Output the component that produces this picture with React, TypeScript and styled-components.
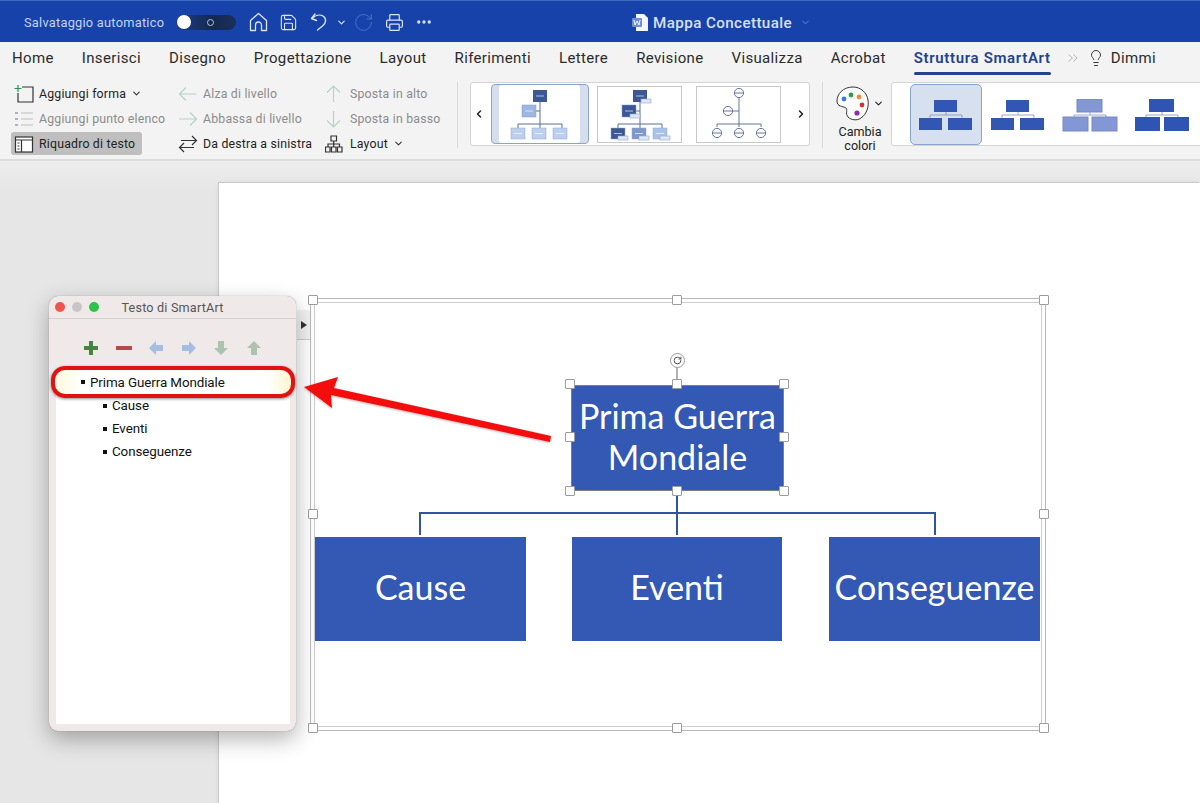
import type {ReactNode} from 'react'
import styled, {createGlobalStyle} from 'styled-components'
import {Save, RotateCw, Printer, Ellipsis, ChevronDown, ChevronLeft, ChevronRight, ChevronsRight, Lightbulb} from 'lucide-react'

const GlobalStyle = createGlobalStyle`
  html, body { margin: 0; padding: 0; background: #e6e6e6; }
  body { font-family: Roboto, "Liberation Sans", sans-serif; }
`

const Screen = styled.div`
  width: 1200px;
  height: 803px;
  overflow: hidden;
  position: relative;
  display: flex;
  flex-direction: column;
`

/* ---- title bar ---- */
const TitleBar = styled.header`
  height: 42px;
  flex: none;
  box-sizing: border-box;
  background: #1742a9;
  border-top: 1px solid #3a6cc4;
  color: #fff;
  display: flex;
  align-items: center;
  padding: 1px 0 0 24px;
  position: relative;
`
const AutoSave = styled.span`
  font-size: 12.8px;
  letter-spacing: 0.25px;
  color: #c5d3ee;
  width: 152px;
`
const Toggle = styled.div`
  width: 60px;
  height: 15px;
  border-radius: 8px;
  background: linear-gradient(90deg, #1b3f8f, #14294f 60%, #1b2f5c);
  display: flex;
  align-items: center;
  margin-right: 7px;
  i {
    width: 14px;
    height: 14px;
    border-radius: 50%;
    background: #fff;
    margin-left: 1px;
  }
  b {
    width: 5px;
    height: 5px;
    border: 1px solid #b9c5de;
    border-radius: 50%;
    margin-left: 16px;
  }
`
const BarIcon = styled.span<{$w: number; $faded?: boolean}>`
  width: ${p => p.$w}px;
  display: flex;
  justify-content: center;
  color: ${p => (p.$faded ? '#5177c6' : '#dce5f6')};
`
const DocTitle = styled.div`
  position: absolute;
  left: 632px;
  top: 1px;
  height: 41px;
  display: flex;
  align-items: center;
  gap: 5px;
  font-size: 15.2px;
  font-weight: 500;
  letter-spacing: 0.4px;
  color: #d6e0f4;
  svg:last-child {
    color: #6f8fd0;
    margin-left: 3px;
  }
`

/* ---- tabs ---- */
const TabBar = styled.nav`
  height: 36px;
  flex: none;
  box-sizing: border-box;
  background: #f3f3f3;
  display: flex;
  align-items: center;
  padding: 0 0 4px 12px;
  gap: 28px;
  color: #2b2b2b;
  font-size: 15px;
  letter-spacing: 0.35px;
`
const Tab = styled.span<{$active?: boolean}>`
  position: relative;
  white-space: nowrap;
  ${p => p.$active && `
    color: #23428f;
    font-weight: 600;
    letter-spacing: 0.65px;
    &::after {
      content: '';
      position: absolute;
      left: 0;
      right: 0;
      bottom: -8px;
      height: 3px;
      border-radius: 2px;
      background: #23428f;
    }
  `}
`
const TabExtras = styled.span`
  display: flex;
  align-items: center;
  margin-left: -14px;
  gap: 6px;
  svg:first-child { color: #b5b5b5; }
`

/* ---- ribbon ---- */
const Ribbon = styled.section`
  height: 83px;
  flex: none;
  box-sizing: border-box;
  background: #f3f3f3;
  border-bottom: 2px solid #dcdcdc;
  display: flex;
  align-items: flex-start;
  padding: 4px 0 0 11px;
`
const CommandColumn = styled.div<{$w: number}>`
  width: ${p => p.$w}px;
  flex: none;
  display: flex;
  flex-direction: column;
`
const Command = styled.div<{$off?: boolean; $on?: boolean; $gap: number}>`
  height: 23px;
  margin-bottom: 2px;
  display: flex;
  align-items: center;
  align-self: flex-start;
  white-space: nowrap;
  font-size: 12.3px;
  letter-spacing: 0.2px;
  border-radius: 3px;
  gap: ${p => p.$gap}px;
  padding-right: 7px;
  color: ${p => (p.$off ? '#8b8b8b' : '#222')};
  background: ${p => (p.$on ? '#bfbfbf' : 'transparent')};
`
const Caret = styled(ChevronDown)<{$m: number}>`
  margin-left: ${p => p.$m}px;
  color: #333;
`
const Divider = styled.div<{$m: number}>`
  width: 1px;
  height: 66px;
  background: #d9d9d9;
  flex: none;
  margin-left: ${p => p.$m}px;
`
const Gallery = styled.div<{$w: number; $m: number}>`
  width: ${p => p.$w}px;
  height: 64px;
  flex: none;
  box-sizing: border-box;
  background: #fff;
  border: 1px solid #d5d5d5;
  border-radius: 3px;
  display: flex;
  align-items: center;
  margin-left: ${p => p.$m}px;
`
const GalleryArrow = styled.span<{$w: number; $pad?: number}>`
  width: ${p => p.$w}px;
  flex: none;
  box-sizing: border-box;
  padding-right: ${p => p.$pad || 0}px;
  display: flex;
  justify-content: center;
  color: #222;
`
const Thumb = styled.div<{$sel?: boolean}>`
  width: 85px;
  height: 57px;
  flex: none;
  box-sizing: border-box;
  border: 1px solid #c9c9c9;
  background: #fff;
  margin-right: 14px;
  ${p => p.$sel && `
    width: 98px;
    height: 60px;
    margin-right: 8px;
    border: 1px solid #86a4cd;
    border-radius: 4px;
    background: #fff;
    box-shadow: inset 7px 0 0 #d4deec, inset -8px 0 0 #d4deec;
  `}
  display: flex;
  align-items: center;
  justify-content: center;
`
const ColorButton = styled.div`
  width: 68px;
  flex: none;
  box-sizing: border-box;
  padding-left: 6px;
  display: flex;
  flex-direction: column;
  align-items: center;
  font-size: 12.6px;
  line-height: 14px;
  text-align: center;
  color: #222;
  span { display: flex; align-items: center; gap: 3px; height: 43px; }
`
const StyleTile = styled.div<{$sel?: boolean}>`
  width: 72px;
  height: 61px;
  flex: none;
  box-sizing: border-box;
  padding-top: 3px;
  display: flex;
  align-items: center;
  justify-content: center;
  border-radius: 5px;
  ${p => p.$sel && `
    background: #d6e0ef;
    border: 1px solid #88a5cf;
    margin-left: 18px;
  `}
`

/* ---- document area ---- */
const Workspace = styled.main`
  flex: 1;
  position: relative;
  background: linear-gradient(#ededed, #e6e6e6 30px);
  padding: 22px 0 0 219px;
  min-height: 0;
`
const Page = styled.div`
  height: 700px;
  background: #fff;
  box-shadow: -1px -1px 0 #c8c8c8, 0 0 6px rgba(0, 0, 0, 0.08);
  position: relative;
`
const SmartFrame = styled.div`
  position: absolute;
  left: 91px;
  top: 115px;
  width: 736px;
  height: 433px;
  box-sizing: border-box;
  border: 1px solid #b9b9b9;
  &::after {
    content: '';
    position: absolute;
    inset: 3px;
    border: 1px solid #cdcdcd;
  }
`
const Handle = styled.i<{$x: number; $y: number}>`
  position: absolute;
  left: ${p => p.$x - 5}px;
  top: ${p => p.$y - 5}px;
  width: 8px;
  height: 8px;
  background: #fff;
  border: 1px solid #9d9d9d;
  border-radius: 1px;
  z-index: 3;
`
const Node = styled.div<{$x: number; $y: number; $w: number; $h: number; $sel?: boolean}>`
  position: absolute;
  left: ${p => p.$x}px;
  top: ${p => p.$y}px;
  width: ${p => p.$w}px;
  height: ${p => p.$h}px;
  box-sizing: border-box;
  padding-bottom: 5px;
  background: #3359b5;
  color: #fff;
  display: flex;
  align-items: center;
  justify-content: center;
  text-align: center;
  font-family: Lato, "Open Sans", sans-serif;
  font-size: 34px;
  line-height: 41px;
  ${p => p.$sel && 'border: 1px solid #7f7f7f;'}
`
const Connectors = styled.svg`
  position: absolute;
  left: 0;
  top: 0;
  width: 981px;
  height: 620px;
  pointer-events: none;
`
const RotateHandle = styled.span`
  position: absolute;
  left: 451px;
  top: 170px;
  width: 13px;
  height: 13px;
  border: 1px solid #9a9a9a;
  border-radius: 50%;
  background: #fff;
  display: flex;
  align-items: center;
  justify-content: center;
  color: #444;
`
const PaneToggle = styled.div`
  position: absolute;
  left: 78px;
  top: 127px;
  width: 13px;
  height: 30px;
  box-sizing: border-box;
  background: #f2f2f2;
  border-bottom: 1px solid #cfcfcf;
  display: flex;
  align-items: center;
  justify-content: center;
  &::before {
    content: '';
    border-left: 6px solid #333;
    border-top: 4px solid transparent;
    border-bottom: 4px solid transparent;
  }
`

/* ---- floating text pane ---- */
const TextPane = styled.aside`
  position: absolute;
  left: 49px;
  top: 135px;
  width: 247px;
  height: 435px;
  box-sizing: border-box;
  background: #f0e9ea;
  border-radius: 9px;
  box-shadow: 0 0 1px rgba(0, 0, 0, 0.45), 0 8px 22px rgba(0, 0, 0, 0.3);
  display: flex;
  flex-direction: column;
  z-index: 5;
`
const PaneHead = styled.div`
  height: 22px;
  flex: none;
  border-bottom: 1px solid #d6d0d1;
  display: flex;
  align-items: center;
  padding-left: 6px;
  gap: 7px;
  position: relative;
  font-size: 12.6px;
  letter-spacing: 0.2px;
  color: #555;
  span {
    position: absolute;
    left: 0;
    right: 0;
    text-align: center;
  }
`
const Light = styled.i<{$c: string}>`
  width: 10px;
  height: 10px;
  border-radius: 50%;
  background: ${p => p.$c};
  position: relative;
  z-index: 1;
`
const PaneTools = styled.div`
  height: 56px;
  flex: none;
  box-sizing: border-box;
  display: flex;
  align-items: center;
  padding: 2px 0 0 34px;
  gap: 16.5px;
`
const OutlineBox = styled.div`
  flex: 1;
  margin: 0 6px 7px 7px;
  background: #fff;
  font-size: 13.4px;
  color: #111;
  padding-top: 19px;
  position: relative;
`
const OutlineRow = styled.div`
  height: 23px;
  display: flex;
  align-items: center;
  gap: 5px;
  padding-left: 47px;
  letter-spacing: -0.1px;
  &::before {
    content: '';
    width: 4px;
    height: 4px;
    background: #111;
  }
`
const FirstRow = styled(OutlineRow)`
  position: absolute;
  left: -5px;
  top: -9px;
  width: 244px;
  height: 32px;
  box-sizing: border-box;
  padding-left: 26px;
  border: 4px solid #e11212;
  border-radius: 14px;
  background: linear-gradient(90deg, #fff9dd 0, #fff 12%, #fff 90%, #fdf6cf 100%);
  box-shadow: 0 1px 3px rgba(0, 0, 0, 0.45);
`
const ArrowOverlay = styled.svg`
  position: absolute;
  left: 0;
  top: 0;
  width: 1200px;
  height: 803px;
  pointer-events: none;
  z-index: 6;
`

/* ---- little drawings ---- */
const CommandGlyph = ({children}: {children: ReactNode}) => (
  <svg width="24" height="20" viewBox="0 0 24 20" fill="none" strokeWidth="1.2">{children}</svg>
)

const OrgThumb = ({top, side, kids, tags, line = '#5a6f96', dashes = '#fff'}: {
  top: string; side: string; kids: string[]; tags?: boolean; line?: string; dashes?: string
}) => (
  <svg width="64" height="54" viewBox="0 0 64 54">
    <path d="M32 8V37M10 42V37H54V42M32 37V42M32 24H26" fill="none" stroke={line} strokeWidth="1"/>
    <rect x="25" y="3" width="14" height="12" fill={top}/>
    <rect x="14" y="18" width="14" height="12" fill={side} stroke="#7f9ccb" strokeWidth="0.5"/>
    {kids.map((c, i) => <rect key={i} x={3 + i * 21} y="41" width="14" height="11" fill={c} stroke="#8ea7d2" strokeWidth="0.5"/>)}
    <path d="M28 9h8M17 24h8M6 46.500h8M27 46.500h8M48 46.500h8" stroke={dashes} strokeWidth="0.8" opacity="0.8"/>
    {tags && <g fill="#dfe7f4" stroke="#8ea7d2" strokeWidth="0.6">
      <rect x="33" y="12" width="10" height="4"/><rect x="22" y="27" width="10" height="4"/>
      <rect x="10" y="49" width="10" height="4"/><rect x="31" y="49" width="10" height="4"/><rect x="52" y="49" width="10" height="4"/>
    </g>}
  </svg>
)

const RingThumb = () => (
  <svg width="64" height="54" viewBox="0 0 64 54" fill="#fff" stroke="#56688c" strokeWidth="0.9">
    <path d="M32 10V37M10 40V37H54V40M32 37V40M32 24H26" fill="none"/>
    <circle cx="32" cy="6" r="4.600"/><path d="M28 6h8"/>
    <circle cx="21" cy="24" r="4.600"/><path d="M17 24h8"/>
    <circle cx="10" cy="46" r="4.600"/><path d="M6 46h8"/>
    <circle cx="32" cy="46" r="4.600"/><path d="M28 46h8"/>
    <circle cx="54" cy="46" r="4.600"/><path d="M50 46h8"/>
  </svg>
)

const StyleGlyph = ({fill, edge = 'none', big = false}: {fill: string; edge?: string; big?: boolean}) => (
  <svg width="56" height="34" viewBox="0 0 56 34">
    <path d="M28 12V16M12 20V16H44V20" fill="none" stroke="#7f96c0" strokeWidth="0.8"/>
    <rect x={big ? 15 : 16} y={big ? 0 : 1} width={big ? 25 : 23} height={big ? 13 : 12} fill={fill} stroke={edge}/>
    <rect x="1" y={big ? 18 : 19} width={big ? 25 : 23} height={big ? 14 : 12} fill={fill} stroke={edge}/>
    <rect x="30" y={big ? 18 : 19} width={big ? 25 : 24} height={big ? 14 : 12} fill={fill} stroke={edge}/>
  </svg>
)

const PaneArrow = ({d, fill}: {d: string; fill: string}) => (
  <svg width="16" height="16" viewBox="0 0 16 16"><path d={d} fill={fill}/></svg>
)

export default function App() {
  return (
    <Screen>
      <GlobalStyle/>
      <TitleBar>
        <AutoSave>Salvataggio automatico</AutoSave>
        <Toggle><i/><b/></Toggle>
        <BarIcon $w={30}>
          <svg width="19" height="20" viewBox="0 0 19 20" fill="none" stroke="currentColor" strokeWidth="1.3" strokeLinejoin="round">
            <path d="M1.500 8.500 9.500 1.500l8 7V18.500H12.500V13a3 3 0 0 0-6 0v5.500H1.500z"/>
          </svg>
        </BarIcon>
        <BarIcon $w={30}><Save size={19} strokeWidth={1.4}/></BarIcon>
        <BarIcon $w={32}>
          <svg width="20" height="20" viewBox="0 0 20 20" fill="none" stroke="currentColor" strokeWidth="1.4" strokeLinecap="round" strokeLinejoin="round">
            <path d="M6 2 2.500 6.500l5 2"/><path d="M3 6.500C6 3.500 10.500 2 14 4c3.500 2.300 3.500 7-.5 10L8.500 18"/>
          </svg>
        </BarIcon>
        <BarIcon $w={12}><ChevronDown size={11} strokeWidth={2.4}/></BarIcon>
        <BarIcon $w={32} $faded><RotateCw size={21} strokeWidth={1}/></BarIcon>
        <BarIcon $w={30}><Printer size={19} strokeWidth={1.5}/></BarIcon>
        <BarIcon $w={30}><Ellipsis size={18} strokeWidth={2.4}/></BarIcon>
        <DocTitle>
          <svg width="16" height="17" viewBox="0 0 16 17">
            <path d="M4 0h8l4 4v13H4z" fill="#f3f6fc"/>
            <rect x="0" y="4" width="10" height="9" rx="1" fill="#6f8fd0"/>
            <path d="M2 6l1 5 2-4 2 4 1-5" fill="none" stroke="#fff" strokeWidth="0.9"/>
          </svg>
          Mappa Concettuale
          <ChevronDown size={11}/>
        </DocTitle>
      </TitleBar>

      <TabBar>
        <Tab>Home</Tab>
        <Tab>Inserisci</Tab>
        <Tab>Disegno</Tab>
        <Tab>Progettazione</Tab>
        <Tab>Layout</Tab>
        <Tab>Riferimenti</Tab>
        <Tab>Lettere</Tab>
        <Tab>Revisione</Tab>
        <Tab>Visualizza</Tab>
        <Tab>Acrobat</Tab>
        <Tab $active>Struttura SmartArt</Tab>
        <TabExtras>
          <ChevronsRight size={16} strokeWidth={1.5}/>
          <Lightbulb size={18} strokeWidth={1.3} color="#333"/>
          Dimmi
        </TabExtras>
      </TabBar>

      <Ribbon>
        <CommandColumn $w={167}>
          <Command $gap={4}>
            <CommandGlyph>
              <path d="M11 3h11v15H7V9" stroke="#333"/><path d="M7 1v7M3.500 4.500h7" stroke="#1f9a4b"/>
            </CommandGlyph>
            Aggiungi forma <Caret $m={1} size={11} strokeWidth={2.4}/>
          </Command>
          <Command $gap={4} $off>
            <CommandGlyph>
              <path d="M10 4h12M10 10h12M10 16h12" stroke="#bdbdbd"/>
              <path d="M4 3h3v2H4zM4 9h3v2H4zM4 15h3v2H4z" fill="#b6a8da"/>
            </CommandGlyph>
            Aggiungi punto elenco
          </Command>
          <Command $gap={4} $on>
            <CommandGlyph>
              <rect x="4.500" y="3" width="17" height="15" fill="#fff" stroke="#333"/>
              <path d="M4.500 6h17M10.500 6v12M6.500 9h2M6.500 12h2M6.500 15h2" stroke="#333"/>
            </CommandGlyph>
            Riquadro di testo
          </Command>
        </CommandColumn>
        <CommandColumn $w={147}>
          <Command $gap={1} $off>
            <CommandGlyph>
              <path d="M18.500 10H1.500M8 3.500 1.500 10 8 16.500" stroke="#b6d5c2"/>
            </CommandGlyph>
            Alza di livello
          </Command>
          <Command $gap={1} $off>
            <CommandGlyph>
              <path d="M1 10h17M12 3.500l6.500 6.500-6.500 6.500" stroke="#b6d5c2"/>
            </CommandGlyph>
            Abbassa di livello
          </Command>
          <Command $gap={1}>
            <CommandGlyph>
              <path d="M3 6.500h15.500M14 2l4.500 4.500L14 11M16 13.500H1.500M6 9l-4.500 4.500L6 18" stroke="#333"/>
            </CommandGlyph>
            Da destra a sinistra
          </Command>
        </CommandColumn>
        <CommandColumn $w={132}>
          <Command $gap={1} $off>
            <CommandGlyph>
              <path d="M8.500 18V2M2 8.500 8.500 2 15 8.500" stroke="#b6d5c2"/>
            </CommandGlyph>
            Sposta in alto
          </Command>
          <Command $gap={1} $off>
            <CommandGlyph>
              <path d="M8.500 2v16M2 11.500 8.500 18 15 11.500" stroke="#b6d5c2"/>
            </CommandGlyph>
            Sposta in basso
          </Command>
          <Command $gap={1}>
            <CommandGlyph>
              <path d="M6 2h5.500v5H6zM.5 13h4.500v5H.5zM6.500 13h4.500v5H6.500zM12.500 13h4.500v5h-4.500zM8.700 7v6M3 13v-3h11.500v3" stroke="#333"/>
            </CommandGlyph>
            Layout <Caret $m={4} size={11} strokeWidth={2.4}/>
          </Command>
        </CommandColumn>
        <Divider $m={0}/>
        <Gallery $w={340} $m={12}>
          <GalleryArrow $w={20} $pad={4}><ChevronLeft size={12} strokeWidth={3}/></GalleryArrow>
          <Thumb $sel><OrgThumb top="#3b5796" side="#9db7e0" kids={['#bcd0ee', '#bcd0ee', '#bcd0ee']}/></Thumb>
          <Thumb><OrgThumb tags top="#3b5796" side="#3b5796" kids={['#3b5796', '#7e97cc', '#a9c3e8']}/></Thumb>
          <Thumb><RingThumb/></Thumb>
          <GalleryArrow $w={12}><ChevronRight size={12} strokeWidth={3}/></GalleryArrow>
        </Gallery>
        <Divider $m={12}/>
        <ColorButton>
          <span>
            <svg width="34" height="36" viewBox="0 0 34 36">
              <path d="M17 1C7 1 1 8 1 15c0 6 6 5 9 7 2 2-1 5 2 9 3 3 9 4 13 1 6-4 8-12 7-18C31 7 25 1 17 1z" fill="#fff" stroke="#333" strokeWidth="1"/>
              <circle cx="8" cy="13" r="2.400" fill="#3a7bd5"/>
              <circle cx="15" cy="9" r="2.400" fill="#2e9a4d"/>
              <circle cx="23" cy="11" r="2.400" fill="#ee8a3c"/>
              <circle cx="26" cy="19" r="2.400" fill="#d9302f"/>
              <circle cx="21" cy="27" r="2.600" fill="#8a2fa8"/>
            </svg>
            <ChevronDown size={11} strokeWidth={2.4}/>
          </span>
          Cambia<br/>colori
        </ColorButton>
        <Gallery $w={320} $m={0}>
          <StyleTile $sel><StyleGlyph fill="#3156b4"/></StyleTile>
          <StyleTile><StyleGlyph fill="#3156b4"/></StyleTile>
          <StyleTile><StyleGlyph big fill="#8397d4" edge="#7689c6"/></StyleTile>
          <StyleTile><StyleGlyph big fill="#2f54b4"/></StyleTile>
        </Gallery>
      </Ribbon>

      <Workspace>
        <Page>
          <PaneToggle/>
          <SmartFrame/>
          <Connectors viewBox="0 0 981 620">
            <path d="M201 352V330H716V352M458 308V352" fill="none" stroke="#32549f" strokeWidth="2"/>
            <path d="M458 183V202" stroke="#666" strokeWidth="1"/>
          </Connectors>
          <RotateHandle><RotateCw size={9} strokeWidth={2.4}/></RotateHandle>
          <Node $sel $x={352} $y={202} $w={213} $h={106}>Prima Guerra<br/>Mondiale</Node>
          <Node $x={96} $y={354} $w={211} $h={104}>Cause</Node>
          <Node $x={353} $y={354} $w={210} $h={104}>Eventi</Node>
          <Node $x={610} $y={354} $w={211} $h={104}>Conseguenze</Node>
          {[[351, 201], [458, 201], [565, 201], [351, 254], [565, 254], [351, 308], [458, 308], [565, 308],
            [94, 117], [458, 117], [825, 117], [94, 331], [825, 331], [94, 545], [458, 545], [825, 545]].map(([x, y]) => (
            <Handle key={`${x}-${y}`} $x={x} $y={y}/>
          ))}
        </Page>
        <TextPane>
          <PaneHead>
            <Light $c="#f0544c"/><Light $c="#c9c5c6"/><Light $c="#2fc24a"/>
            <span>Testo di SmartArt</span>
          </PaneHead>
          <PaneTools>
            <PaneArrow fill="#46853f" d="M6 1h4v5h5v4h-5v5H6v-5H1V6h5z"/>
            <PaneArrow fill="#b24a4c" d="M0 6h16v4H0z"/>
            <PaneArrow fill="#a6bde2" d="M8 1v4h7v6H8v4L1 8z"/>
            <PaneArrow fill="#a6bde2" d="M8 1v4H1v6h7v4l7-7z"/>
            <PaneArrow fill="#adc3ad" d="M5 1h6v7h4l-7 7-7-7h4z"/>
            <PaneArrow fill="#adc3ad" d="M5 15h6V8h4L8 1 1 8h4z"/>
          </PaneTools>
          <OutlineBox>
            <FirstRow>Prima Guerra Mondiale</FirstRow>
            <OutlineRow>Cause</OutlineRow>
            <OutlineRow>Eventi</OutlineRow>
            <OutlineRow>Conseguenze</OutlineRow>
          </OutlineBox>
        </TextPane>
      </Workspace>

      <ArrowOverlay viewBox="0 0 1200 803">
        <defs>
          <filter id="arrowShade" x="-10%" y="-20%" width="120%" height="140%">
            <feDropShadow dx="0" dy="1" stdDeviation="1" floodOpacity="0.3"/>
          </filter>
        </defs>
        <path d="M304 387 338 377 334 388 551 436 550 442 331 395 332 408z" fill="#f40f0f" filter="url(#arrowShade)"/>
      </ArrowOverlay>
    </Screen>
  )
}
